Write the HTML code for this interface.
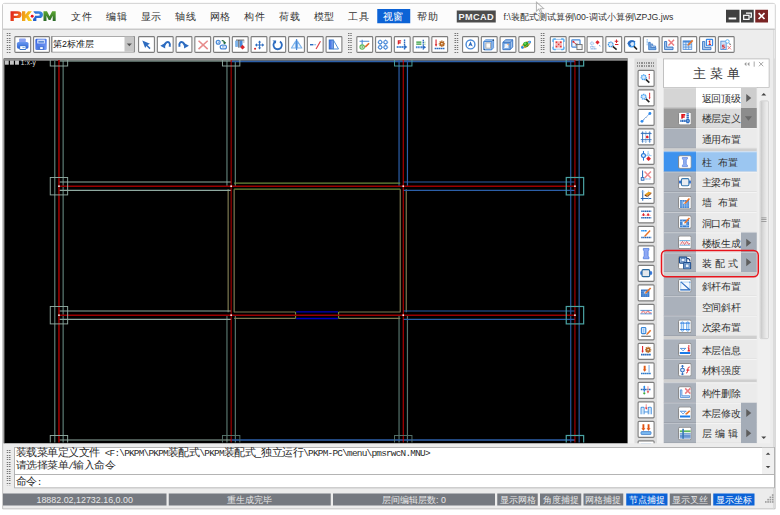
<!DOCTYPE html>
<html lang="zh"><head><meta charset="utf-8"><title>PKPM PMCAD</title>
<style>
html,body{margin:0;padding:0;background:#fff;}
body{width:780px;height:515px;overflow:hidden;position:relative;font-family:"Liberation Sans",sans-serif;}
#root{position:absolute;left:0;top:0;width:1040px;height:687px;transform:scale(.75);transform-origin:0 0;overflow:hidden;}
#root div{position:absolute;box-sizing:border-box;}
.mi{font-size:13.6px;line-height:18.93px;color:#333;white-space:nowrap;text-align:center;}
.tb{}
.tb svg{position:absolute;left:0;top:0;display:block;}
.mono{font-family:"Liberation Mono",monospace;font-size:12.53px;letter-spacing:-1.02px;}
svg{overflow:visible;}
</style></head>
<body><div id="root">
<div class="win" style="left:2.93px;top:3.73px;width:1031.2px;height:675.6px;background:#ececec;border:1px solid #b4b4b4;border-radius:3px 3px 0 0;"></div>
<div style="left:4px;top:4.8px;width:1029.33px;height:33.87px;background:#fcfcfc;"></div>
<div style="left:4px;top:38.4px;width:1029.33px;height:1.33px;background:#c9c9c9;"></div>
<div style="left:4px;top:39.73px;width:1029.33px;height:38.4px;background:#ededed;"></div>
<div style="left:1030.93px;top:40px;width:1.07px;height:638.67px;background:#d6d6d6;"></div>
<svg width="60.27px" height="12.93px" viewBox="0 0 45.2 9.7" style="position:absolute;left:13.73px;top:14.67px">
<defs><linearGradient id="lg1" x1="0" y1="0" x2="1" y2=".4"><stop offset="0" stop-color="#e0201c"/><stop offset=".55" stop-color="#e8421c"/><stop offset="1" stop-color="#ee7a1a"/></linearGradient>
<linearGradient id="lg2" x1="0" y1="0" x2="1" y2=".3"><stop offset="0" stop-color="#ef8f18"/><stop offset="1" stop-color="#f6cf1a"/></linearGradient>
<linearGradient id="lg3" x1="0" y1="1" x2="1" y2="0"><stop offset="0" stop-color="#1a55c8"/><stop offset="1" stop-color="#3f90e6"/></linearGradient>
<linearGradient id="lg4" x1="0" y1="0" x2="0" y2="1"><stop offset="0" stop-color="#5aa630"/><stop offset="1" stop-color="#2c6a2a"/></linearGradient></defs>
<path d="M0 0 H7 C10 0 11.1 1.6 11.1 3.4 C11.1 5.4 9.8 6.8 7 6.8 H3.3 V9.7 H0 Z M3.3 2.6 V4.4 H6.4 C7.4 4.4 7.8 4 7.8 3.5 C7.8 3 7.4 2.6 6.4 2.6 Z" fill="url(#lg1)" fill-rule="evenodd"/>
<path d="M11.5 0 H14.8 V3.5 L17.6 0 H21.4 L17.9 4.3 L21.6 9.7 H17.7 L15.6 6.3 L14.8 7.2 V9.7 H11.5 Z" fill="url(#lg2)"/>
<path d="M23.6 0 H28.4 C31.4 0 32.5 1.6 32.5 3.4 C32.5 5.4 31.2 6.8 28.4 6.8 H25.9 V9.7 H22.6 V6.6 L24.6 4.4 H27.8 C28.8 4.4 29.2 4 29.2 3.5 C29.2 3 28.8 2.6 27.8 2.6 H24.8 L22.8 0.6 Z" fill="url(#lg3)"/>
<circle cx="21.7" cy="5" r="2.5" fill="#fcfcfc"/><circle cx="21.7" cy="5" r="1.45" fill="#e8121c"/>
<path d="M33 9.7 V0 H36.5 L39.1 5 L41.7 0 H45.2 V9.7 H42.2 V4.6 L40 8.7 H38.2 L36 4.6 V9.7 Z" fill="url(#lg4)"/>
</svg>
<div class="mi" style="left:88px;top:13.2px;width:42.67px;height:18.8px;">文件</div>
<div class="mi" style="left:134.13px;top:13.2px;width:42.67px;height:18.8px;">编辑</div>
<div class="mi" style="left:180.27px;top:13.2px;width:42.67px;height:18.8px;">显示</div>
<div class="mi" style="left:226.4px;top:13.2px;width:42.67px;height:18.8px;">轴线</div>
<div class="mi" style="left:272.53px;top:13.2px;width:42.67px;height:18.8px;">网格</div>
<div class="mi" style="left:318.67px;top:13.2px;width:42.67px;height:18.8px;">构件</div>
<div class="mi" style="left:364.8px;top:13.2px;width:42.67px;height:18.8px;">荷载</div>
<div class="mi" style="left:410.93px;top:13.2px;width:42.67px;height:18.8px;">模型</div>
<div class="mi" style="left:457.07px;top:13.2px;width:42.67px;height:18.8px;">工具</div>
<div style="left:502.93px;top:12.27px;width:43.73px;height:18.93px;background:#0c63d6;"></div>
<div class="mi" style="left:503.2px;top:13.2px;width:42.67px;height:18.8px;color:#fff;">视窗</div>
<div class="mi" style="left:549.33px;top:13.2px;width:42.67px;height:18.8px;">帮助</div>
<div style="left:608.8px;top:13.6px;width:52.27px;height:16.53px;background:#4c4c4c;color:#f4f4f4;font-weight:bold;font-size:12.27px;line-height:17.07px;text-align:center;letter-spacing:0.5px;">PMCAD</div>
<div style="left:671.33px;top:12.8px;width:262px;height:18.93px;font-size:11.6px;line-height:18.93px;color:#333;white-space:nowrap;">f:\装配式测试算例\00-调试小算例\ZPJG.jws</div>
<div style="left:968.4px;top:13.33px;width:17.2px;height:16.8px;background:#404040;"><svg width="100%" height="100%" viewBox="0 0 17 17" preserveAspectRatio="none"><rect x="3.5" y="10.5" width="10" height="2.6" fill="#fff"/></svg></div>
<div style="left:988px;top:13.33px;width:17.33px;height:16.8px;background:#404040;"><svg width="100%" height="100%" viewBox="0 0 17 17" preserveAspectRatio="none"><path d="M6.5 4.5h7v5.5h-2" fill="none" stroke="#fff" stroke-width="1.6"/><rect x="3.5" y="7.5" width="7" height="5.5" fill="none" stroke="#fff" stroke-width="1.6"/></svg></div>
<div style="left:1007.47px;top:13.33px;width:16.8px;height:16.8px;background:#7a2424;"><svg width="100%" height="100%" viewBox="0 0 17 17" preserveAspectRatio="none"><path d="M4.5 4.5l8 8M12.5 4.5l-8 8" stroke="#fff" stroke-width="2.2"/></svg></div>
<svg style="position:absolute;left:714.4px;top:1.6px" width="14.67px" height="17.33px" viewBox="0 0 12 14"><path d="M1 0.5 L1 10.5 L3.6 8.2 L5.6 12.6 L7.2 11.9 L5.3 7.7 L8.8 7.5 Z" fill="#fdfdfd" stroke="#b4b4b4" stroke-width="1.1"/></svg>
<div style="left:8.53px;top:44.27px;width:2px;height:28px;background:repeating-linear-gradient(to bottom,#777 0,#777 1.5px,#ededed 1.5px,#ededed 3.1px);"></div><div style="left:11.6px;top:44.27px;width:2px;height:28px;background:repeating-linear-gradient(to bottom,#777 0,#777 1.5px,#ededed 1.5px,#ededed 3.1px);"></div>
<div class="tb" style="left:18.8px;top:47.73px;width:22.67px;height:22.67px;"><svg width="22.67px" height="22.67px" viewBox="0 0 23 23"><rect x=".8" y=".8" width="21.4" height="21.4" rx="1.2" fill="#fff" stroke="#7c7c7c" stroke-width="1.45"/><g transform="translate(-0.2 0.4)"><defs><linearGradient id="gp" x1="0" y1="0" x2="0" y2="1"><stop offset="0" stop-color="#6a9af0"/><stop offset="1" stop-color="#2f62d6"/></linearGradient></defs><rect x="6.8" y="3.1" width="9" height="6" rx="1" fill="#8aa2f2"/><rect x="3.8" y="7.6" width="15.7" height="9.2" rx="2.2" fill="url(#gp)"/><rect x="7.2" y="12.6" width="9" height="6" rx="1" fill="#3a78cc"/><rect x="8.2" y="13.4" width="7.2" height="3.8" fill="#fff"/><rect x="11.3" y="14.9" width="3.1" height="1" fill="#4a8ad8"/></g></svg></div>
<div class="tb" style="left:44.4px;top:47.73px;width:22.67px;height:22.67px;"><svg width="22.67px" height="22.67px" viewBox="0 0 23 23"><rect x=".8" y=".8" width="21.4" height="21.4" rx="1.2" fill="#fff" stroke="#7c7c7c" stroke-width="1.45"/><g transform="translate(-0.2 0.4)"><defs><linearGradient id="gf" x1="0" y1="0" x2="1" y2="1"><stop offset="0" stop-color="#2f5fe0"/><stop offset="1" stop-color="#7fa2f4"/></linearGradient></defs><rect x="3.4" y="3.4" width="15.4" height="15.1" rx="1.6" fill="url(#gf)"/><rect x="5.8" y="4.5" width="10.6" height="5.4" rx=".6" fill="#cfdcf8"/><rect x="7.5" y="6.4" width="7.5" height="2.2" fill="#5a8ad8"/><rect x="6.2" y="13.4" width="9.2" height="5" fill="#4a78d8"/><rect x="9.9" y="14.7" width="3.5" height="2.5" fill="#fff"/></g></svg></div>
<div style="left:68.27px;top:47.73px;width:111.6px;height:22.53px;background:#8e8e8e;border-radius:1px;"></div>
<div style="left:69.73px;top:49.2px;width:108.67px;height:19.6px;background:#fff;"></div>
<div style="left:166.13px;top:49.2px;width:12.27px;height:19.6px;background:#c6c6c6;"></div>
<svg style="position:absolute;left:169.07px;top:57.87px" width="6.93px" height="3.73px" viewBox="0 0 8 4"><path d="M0 0H8L4 4Z" fill="#555"/></svg>
<div style="left:70.67px;top:48.8px;width:94.67px;height:20.53px;font-size:11.87px;line-height:20.8px;color:#111;white-space:nowrap;">第2标准层</div>
<div class="tb" style="left:184.27px;top:47.73px;width:22.67px;height:22.67px;"><svg width="22.67px" height="22.67px" viewBox="0 0 23 23"><rect x=".8" y=".8" width="21.4" height="21.4" rx="1.2" fill="#fff" stroke="#7c7c7c" stroke-width="1.45"/><g transform="translate(-0.2 0.4)"><path d="M6 5.8 L16.4 10.2 L13 11.7 L17.2 16 L15.8 17.4 L11.6 13.2 L9.9 15.8 Z" fill="#2d6cc0"/></g></svg></div>
<div class="tb" style="left:209.24px;top:47.73px;width:22.67px;height:22.67px;"><svg width="22.67px" height="22.67px" viewBox="0 0 23 23"><rect x=".8" y=".8" width="21.4" height="21.4" rx="1.2" fill="#fff" stroke="#7c7c7c" stroke-width="1.45"/><g transform="translate(-0.2 0.4)"><path d="M5 12.8 L11.6 9 V16.6 Z" fill="#2d6cc0"/><path d="M11 12.4 C11.4 8.4 15 6.6 17 8.6 C18.4 10 18.3 12 17.7 14.2" fill="none" stroke="#2d6cc0" stroke-width="2.7"/></g></svg></div>
<div class="tb" style="left:234.21px;top:47.73px;width:22.67px;height:22.67px;"><svg width="22.67px" height="22.67px" viewBox="0 0 23 23"><rect x=".8" y=".8" width="21.4" height="21.4" rx="1.2" fill="#fff" stroke="#7c7c7c" stroke-width="1.45"/><g transform="translate(-0.2 0.4)"><path d="M18.4 12.8 L11.8 9 V16.6 Z" fill="#2d6cc0"/><path d="M12.4 12.4 C12 8.4 8.4 6.6 6.4 8.6 C5 10 5.1 12 5.7 14.2" fill="none" stroke="#2d6cc0" stroke-width="2.7"/></g></svg></div>
<div class="tb" style="left:259.19px;top:47.73px;width:22.67px;height:22.67px;"><svg width="22.67px" height="22.67px" viewBox="0 0 23 23"><rect x=".8" y=".8" width="21.4" height="21.4" rx="1.2" fill="#fff" stroke="#7c7c7c" stroke-width="1.45"/><g transform="translate(-0.2 0.4)"><path d="M6 6 L18.4 17.4 M18.4 6 L6 17.4" stroke="#e78b8b" stroke-width="2.1" fill="none"/></g></svg></div>
<div class="tb" style="left:284.16px;top:47.73px;width:22.67px;height:22.67px;"><svg width="22.67px" height="22.67px" viewBox="0 0 23 23"><rect x=".8" y=".8" width="21.4" height="21.4" rx="1.2" fill="#fff" stroke="#7c7c7c" stroke-width="1.45"/><g transform="translate(-0.2 0.4)"><circle cx="7.2" cy="8" r="2.6" fill="#fff" stroke="#4a8ad8" stroke-width="1.7"/><circle cx="7.4" cy="8" r=".8" fill="#4a8ad8"/><rect x="10" y="11.8" width="8.4" height="5.2" rx="2.6" fill="#fff" stroke="#4a8ad8" stroke-width="1.7"/><path d="M12.4 14.4h3.4" stroke="#4a8ad8" stroke-width="1.2"/><path d="M12 5.2 C14.6 5 16.2 6.4 16.4 8.2 L18 7.8 L16.4 11 L13.4 8.8 L15 8.5 C14.6 7.2 13.6 6.8 12 6.8 Z" fill="#1f6b3f"/></g></svg></div>
<div class="tb" style="left:309.13px;top:47.73px;width:22.67px;height:22.67px;"><svg width="22.67px" height="22.67px" viewBox="0 0 23 23"><rect x=".8" y=".8" width="21.4" height="21.4" rx="1.2" fill="#fff" stroke="#7c7c7c" stroke-width="1.45"/><g transform="translate(-0.2 0.4)"><rect x="4.8" y="5.6" width="3.8" height="8.8" rx="1" fill="#7db3ea"/><rect x="8.8" y="5" width="2" height="10.4" fill="#6e7680"/><rect x="11" y="5.6" width="3.8" height="9" fill="#4a8ad8"/><path d="M6 5.1H17" stroke="#444" stroke-width="1.1"/><path d="M16.6 5.2V9" stroke="#999" stroke-width="1"/><path d="M14.8 11.6 L18 14.8 L14.8 18 L11.6 14.8 Z" fill="#d9262c"/></g></svg></div>
<div class="tb" style="left:334.11px;top:47.73px;width:22.67px;height:22.67px;"><svg width="22.67px" height="22.67px" viewBox="0 0 23 23"><rect x=".8" y=".8" width="21.4" height="21.4" rx="1.2" fill="#fff" stroke="#7c7c7c" stroke-width="1.45"/><g transform="translate(-0.2 0.4)"><path d="M12.5 5.6 L14.7 8.4 H13.2 V11 H16 V9.4 L18.8 11.7 L16 14 V12.4 H13.2 V15 H14.7 L12.5 17.8 L10.3 15 H11.8 V12.4 H9 V14 L6.2 11.7 L9 9.4 V11 H11.8 V8.4 H10.3 Z" fill="#2d6cc0"/><circle cx="6.4" cy="16.9" r="1.4" fill="#d9262c"/></g></svg></div>
<div class="tb" style="left:359.08px;top:47.73px;width:22.67px;height:22.67px;"><svg width="22.67px" height="22.67px" viewBox="0 0 23 23"><rect x=".8" y=".8" width="21.4" height="21.4" rx="1.2" fill="#fff" stroke="#7c7c7c" stroke-width="1.45"/><g transform="translate(-0.2 0.4)"><path d="M8.6 7 A5.7 5.7 0 1 0 14.6 7" fill="none" stroke="#2d6cc0" stroke-width="2.5"/><path d="M4.6 5.6 L9.6 5.6 L9.2 10 Z" fill="#2d6cc0"/></g></svg></div>
<div class="tb" style="left:384.05px;top:47.73px;width:22.67px;height:22.67px;"><svg width="22.67px" height="22.67px" viewBox="0 0 23 23"><rect x=".8" y=".8" width="21.4" height="21.4" rx="1.2" fill="#fff" stroke="#7c7c7c" stroke-width="1.45"/><g transform="translate(-0.2 0.4)"><path d="M10.7 6.6 L10.7 15.9 L4.8 15.9 Z M12.9 6.6 L12.9 15.9 L19 15.9 Z" fill="#eaf3fc" stroke="#7db3ea" stroke-width="1.5" stroke-linejoin="round"/><path d="M11.8 3.8 V18.6" stroke="#4a8ad8" stroke-width="1.7"/></g></svg></div>
<div class="tb" style="left:409.03px;top:47.73px;width:22.67px;height:22.67px;"><svg width="22.67px" height="22.67px" viewBox="0 0 23 23"><rect x=".8" y=".8" width="21.4" height="21.4" rx="1.2" fill="#fff" stroke="#7c7c7c" stroke-width="1.45"/><g transform="translate(-0.2 0.4)"><path d="M4.6 11.4 H9.2" stroke="#2d6cc0" stroke-width="1.9"/><path d="M10.4 11.4 H12.8" stroke="#7db3ea" stroke-width="1.5"/><path d="M18.8 6.8 L12.8 17.2" stroke="#e0444a" stroke-width="1.6"/></g></svg></div>
<div class="tb" style="left:434px;top:47.73px;width:22.67px;height:22.67px;"><svg width="22.67px" height="22.67px" viewBox="0 0 23 23"><rect x=".8" y=".8" width="21.4" height="21.4" rx="1.2" fill="#fff" stroke="#7c7c7c" stroke-width="1.45"/><g transform="translate(-0.2 0.4)"><defs><linearGradient id="g12" x1="0" x2="1"><stop offset="0" stop-color="#2f5fe0"/><stop offset="1" stop-color="#8fb4f4"/></linearGradient></defs><rect x="5.2" y="5" width="5.6" height="12.2" fill="url(#g12)" stroke="#2d6cc0" stroke-width="1.2"/><path d="M10.8 5 L17.8 17.2 H10.8" fill="none" stroke="#4a8ad8" stroke-width="1.3"/></g></svg></div>
<div style="left:464.4px;top:44.27px;width:2px;height:28px;background:repeating-linear-gradient(to bottom,#777 0,#777 1.5px,#ededed 1.5px,#ededed 3.1px);"></div><div style="left:467.47px;top:44.27px;width:2px;height:28px;background:repeating-linear-gradient(to bottom,#777 0,#777 1.5px,#ededed 1.5px,#ededed 3.1px);"></div>
<div class="tb" style="left:475.33px;top:47.73px;width:22.67px;height:22.67px;"><svg width="22.67px" height="22.67px" viewBox="0 0 23 23"><rect x=".8" y=".8" width="21.4" height="21.4" rx="1.2" fill="#fff" stroke="#7c7c7c" stroke-width="1.45"/><g transform="translate(-0.2 0.4)"><path d="M4.6 6.8 H17.8 M8.2 4.8 V11.6" stroke="#4a8ad8" stroke-width="1.5" fill="none"/><circle cx="8.2" cy="14.6" r="3" fill="#e6f5e6" stroke="#5cb85c" stroke-width="1.5"/><path d="M8.2 13V16.2" stroke="#3c9c3c" stroke-width="1.2"/><path d="M12 13.2 L16.8 8.6 L18.4 10.2 L13.6 14.8 L11.6 15.2 Z" fill="#e06a2a"/></g></svg></div>
<div class="tb" style="left:500.31px;top:47.73px;width:22.67px;height:22.67px;"><svg width="22.67px" height="22.67px" viewBox="0 0 23 23"><rect x=".8" y=".8" width="21.4" height="21.4" rx="1.2" fill="#fff" stroke="#7c7c7c" stroke-width="1.45"/><g transform="translate(-0.2 0.4)"><g fill="#fff" stroke="#4a8ad8" stroke-width="1.5"><path d="M7.2 4.2V18.6M14.5 4.2V18.6M3.6 8H18.2M3.6 14.9H18.2" stroke-width=".9"/><circle cx="7.2" cy="8" r="2.3"/><circle cx="14.5" cy="8" r="2.3"/><circle cx="7.2" cy="14.9" r="2.3"/><circle cx="14.5" cy="14.9" r="2.3"/></g></g></svg></div>
<div class="tb" style="left:525.28px;top:47.73px;width:22.67px;height:22.67px;"><svg width="22.67px" height="22.67px" viewBox="0 0 23 23"><rect x=".8" y=".8" width="21.4" height="21.4" rx="1.2" fill="#fff" stroke="#7c7c7c" stroke-width="1.45"/><g transform="translate(-0.2 0.4)"><path d="M5.6 5.3 H10.2 V7.2 H7.8 V8 H9.8 V9.6 H7.8 L6.6 11.2 H5.6 Z" fill="#d9262c"/><path d="M14.8 4.2 V18" stroke="#2d6cc0" stroke-width="1.9" stroke-dasharray="2.2 .7"/><path d="M4.2 14.4 H15" stroke="#4a8ad8" stroke-width="2.6" stroke-dasharray="1.8 .5"/><path d="M14.6 11.6 L18.6 14.4 L14.6 17.2 Z" fill="#2d6cc0"/></g></svg></div>
<div class="tb" style="left:550.25px;top:47.73px;width:22.67px;height:22.67px;"><svg width="22.67px" height="22.67px" viewBox="0 0 23 23"><rect x=".8" y=".8" width="21.4" height="21.4" rx="1.2" fill="#fff" stroke="#7c7c7c" stroke-width="1.45"/><g transform="translate(-0.2 0.4)"><path d="M5.3 8 H12.2 M5.3 10.7 H12.2" stroke="#2f9a3a" stroke-width="1.7"/><path d="M16.2 8h1.6M16.2 10.7h1.6" stroke="#6cc06c" stroke-width="1.2"/><path d="M14.8 4.8 V18" stroke="#2d6cc0" stroke-width="1.9" stroke-dasharray="2.2 .7"/><path d="M4.8 14.8 H15" stroke="#4a8ad8" stroke-width="2.6" stroke-dasharray="1.8 .5"/><path d="M14.6 12 L18.6 14.8 L14.6 17.6 Z" fill="#2d6cc0"/></g></svg></div>
<div class="tb" style="left:575.23px;top:47.73px;width:22.67px;height:22.67px;"><svg width="22.67px" height="22.67px" viewBox="0 0 23 23"><rect x=".8" y=".8" width="21.4" height="21.4" rx="1.2" fill="#fff" stroke="#7c7c7c" stroke-width="1.45"/><g transform="translate(-0.2 0.4)"><path d="M6.7 4.2 V12" stroke="#d9262c" stroke-width="1.5"/><path d="M5 10.8 L6.7 14 L8.4 10.8 Z" fill="#d9262c"/><g stroke="#b5651d" stroke-width="1.7"><path d="M14.6 5.8V14.4M10.3 10.1H18.9M11.6 7.1L17.6 13.1M17.6 7.1L11.6 13.1"/></g><circle cx="14.6" cy="10.1" r="2.5" fill="#b5651d"/><circle cx="14.6" cy="10.1" r="1.1" fill="#fff"/><path d="M4.8 16.5 H18.6" stroke="#2d6cc0" stroke-width="2.2" stroke-dasharray="2.2 .5"/></g></svg></div>
<div style="left:605.73px;top:44.27px;width:2px;height:28px;background:repeating-linear-gradient(to bottom,#777 0,#777 1.5px,#ededed 1.5px,#ededed 3.1px);"></div><div style="left:608.8px;top:44.27px;width:2px;height:28px;background:repeating-linear-gradient(to bottom,#777 0,#777 1.5px,#ededed 1.5px,#ededed 3.1px);"></div>
<div class="tb" style="left:616.27px;top:47.73px;width:22.67px;height:22.67px;"><svg width="22.67px" height="22.67px" viewBox="0 0 23 23"><rect x=".8" y=".8" width="21.4" height="21.4" rx="1.2" fill="#fff" stroke="#7c7c7c" stroke-width="1.45"/><g transform="translate(-0.2 0.4)"><circle cx="11.7" cy="11" r="6" fill="#fff" stroke="#4a8ad8" stroke-width="1.9"/><path d="M11.7 6.8 L14.8 13.8 L11.7 12.2 L8.6 13.8 Z" fill="#2d6cc0"/></g></svg></div>
<div class="tb" style="left:641.24px;top:47.73px;width:22.67px;height:22.67px;"><svg width="22.67px" height="22.67px" viewBox="0 0 23 23"><rect x=".8" y=".8" width="21.4" height="21.4" rx="1.2" fill="#fff" stroke="#7c7c7c" stroke-width="1.45"/><g transform="translate(-0.2 0.4)"><path d="M4.4 7 L7 4.7 H17.6 V15.6 L15.2 18.1 H4.4 Z" fill="#a9c8ee" stroke="#4a8ad8" stroke-width="1.1"/><rect x="4.4" y="7" width="10.8" height="11.1" rx=".8" fill="#cfe0f5" stroke="#4a8ad8" stroke-width="1.4"/><rect x="7.2" y="9" width="6.4" height="7" fill="#fbfbfb" stroke="#9a9a9a" stroke-width="1"/><path d="M15.2 7 L17.6 4.7" stroke="#4a8ad8" stroke-width="1.1"/><circle cx="17.2" cy="5.2" r=".9" fill="#234"/><circle cx="5" cy="17.5" r=".8" fill="#234"/></g></svg></div>
<div class="tb" style="left:666.21px;top:47.73px;width:22.67px;height:22.67px;"><svg width="22.67px" height="22.67px" viewBox="0 0 23 23"><rect x=".8" y=".8" width="21.4" height="21.4" rx="1.2" fill="#fff" stroke="#7c7c7c" stroke-width="1.45"/><g transform="translate(-0.2 0.4)"><path d="M4.8 8.2 L8.6 4.7 H18.1 V14.4 L14.6 18.1 H4.8 Z" fill="#9fc2ec" stroke="#2d6cc0" stroke-width="1.2"/><path d="M4.8 8.2 H14.6 V18.1 M14.6 8.2 L18.1 4.7" fill="none" stroke="#2d6cc0" stroke-width="1.2"/><rect x="6.4" y="10" width="6.6" height="6.6" fill="#e4eefb" stroke="#4a8ad8" stroke-width=".8"/><path d="M6.8 16.2 L12.6 10.4" stroke="#fff" stroke-width="1.3"/><path d="M10.5 10.6h1.8v1.6" stroke="#e8842a" stroke-width=".9" fill="none"/></g></svg></div>
<div class="tb" style="left:691.19px;top:47.73px;width:22.67px;height:22.67px;"><svg width="22.67px" height="22.67px" viewBox="0 0 23 23"><rect x=".8" y=".8" width="21.4" height="21.4" rx="1.2" fill="#fff" stroke="#7c7c7c" stroke-width="1.45"/><g transform="translate(-0.2 0.4)"><ellipse cx="10.6" cy="11.4" rx="6.4" ry="2.6" transform="rotate(-35 10.6 11.4)" fill="none" stroke="#e8922a" stroke-width="1.3"/><circle cx="10.6" cy="11" r="3.7" fill="#22a022"/><circle cx="9.6" cy="9.8" r="1.6" fill="#7be06a" opacity=".85"/><path d="M6 15.2 C8 15.2 12 13.4 14.6 10" fill="none" stroke="#e8922a" stroke-width="1.2"/><circle cx="15.6" cy="7.8" r="1.9" fill="#2a8ae8"/><circle cx="15.6" cy="7.8" r=".7" fill="#bfe0ff"/><circle cx="5.8" cy="15" r="1.7" fill="#2a8ae8"/></g></svg></div>
<div style="left:721.33px;top:44.27px;width:2px;height:28px;background:repeating-linear-gradient(to bottom,#777 0,#777 1.5px,#ededed 1.5px,#ededed 3.1px);"></div><div style="left:724.4px;top:44.27px;width:2px;height:28px;background:repeating-linear-gradient(to bottom,#777 0,#777 1.5px,#ededed 1.5px,#ededed 3.1px);"></div>
<div class="tb" style="left:732.53px;top:47.73px;width:22.67px;height:22.67px;"><svg width="22.67px" height="22.67px" viewBox="0 0 23 23"><rect x=".8" y=".8" width="21.4" height="21.4" rx="1.2" fill="#fff" stroke="#7c7c7c" stroke-width="1.45"/><g transform="translate(-0.2 0.4)"><rect x="5.2" y="4.2" width="13.6" height="13.2" rx="1.4" fill="none" stroke="#4a8ad8" stroke-width=".7"/><path d="M4.6 7.6 V5 Q4.6 3.6 6 3.6 H8.4 M15.6 3.6 H18 Q19.4 3.6 19.4 5 V7.6 M19.4 14 V16.6 Q19.4 18 18 18 H15.6 M8.4 18 H6 Q4.6 18 4.6 16.6 V14" fill="none" stroke="#58aef0" stroke-width="1.9"/><g fill="#e63a3a"><rect x="8" y="6.8" width="2.8" height="2.8"/><rect x="13.6" y="6.8" width="2.8" height="2.8"/><rect x="10.8" y="9.6" width="2.8" height="2.8"/><rect x="8" y="12.4" width="2.8" height="2.8"/><rect x="13.6" y="12.4" width="2.8" height="2.8"/></g><g fill="#f6b4b4"><rect x="10.8" y="6.8" width="2.8" height="2.8"/><rect x="8" y="9.6" width="2.8" height="2.8"/><rect x="13.6" y="9.6" width="2.8" height="2.8"/><rect x="10.8" y="12.4" width="2.8" height="2.8"/></g></g></svg></div>
<div class="tb" style="left:757.51px;top:47.73px;width:22.67px;height:22.67px;"><svg width="22.67px" height="22.67px" viewBox="0 0 23 23"><rect x=".8" y=".8" width="21.4" height="21.4" rx="1.2" fill="#fff" stroke="#7c7c7c" stroke-width="1.45"/><g transform="translate(-0.2 0.4)"><rect x="4.6" y="4.8" width="11.2" height="9.8" rx="1" fill="#eef4fc" stroke="#4a8ad8" stroke-width="1.6"/><path d="M7 7.6 L11.6 11.6" stroke="#d9262c" stroke-width="1.2"/><rect x="5.6" y="6.2" width="2.4" height="2.4" fill="#d9262c"/><path d="M11.6 9.4V11.8H9.4" stroke="#333" stroke-width=".9" fill="none"/><rect x="11.6" y="11.2" width="7" height="6.8" fill="#f4f4f4" stroke="#707070" stroke-width="1.3"/></g></svg></div>
<div class="tb" style="left:782.48px;top:47.73px;width:22.67px;height:22.67px;"><svg width="22.67px" height="22.67px" viewBox="0 0 23 23"><rect x=".8" y=".8" width="21.4" height="21.4" rx="1.2" fill="#fff" stroke="#7c7c7c" stroke-width="1.45"/><g transform="translate(-0.2 0.4)"><path d="M5.4 10 C5.2 7.6 8.4 6.6 9.6 8.6 C10.6 10 9.4 11.8 7.8 11.8 C6.4 11.8 5.6 11 5.4 10 Z" fill="#e2eefb" stroke="#7db3ea" stroke-width="1" stroke-dasharray="1.4 .6"/><path d="M5.2 14.6 C7.4 13.4 9.4 14.8 12 14.4 M5.8 17 H13.6" fill="none" stroke="#4a8ad8" stroke-width="1.2" stroke-dasharray="1.6 .5"/><path d="M15.1 5.2 L18 8.1 L15.1 11 L12.2 8.1 Z" fill="#e02a34"/><path d="M17.6 11.8 L18.8 13.8" stroke="#4a8ad8" stroke-width="1"/></g></svg></div>
<div class="tb" style="left:807.45px;top:47.73px;width:22.67px;height:22.67px;"><svg width="22.67px" height="22.67px" viewBox="0 0 23 23"><rect x=".8" y=".8" width="21.4" height="21.4" rx="1.2" fill="#fff" stroke="#7c7c7c" stroke-width="1.45"/><g transform="translate(-0.2 0.4)"><circle cx="7.6" cy="11" r="3.2" fill="#dcebfa" stroke="#3a94e8" stroke-width="1.7" stroke-dasharray="1.9 .7"/><path d="M10.4 13.8 L15.6 18" stroke="#222" stroke-width="2.2"/><path d="M13 6.8 H17.8 M15.4 4.4 V9.2 M13.4 11.2 H18" stroke="#d9262c" stroke-width="1.4"/></g></svg></div>
<div class="tb" style="left:832.43px;top:47.73px;width:22.67px;height:22.67px;"><svg width="22.67px" height="22.67px" viewBox="0 0 23 23"><rect x=".8" y=".8" width="21.4" height="21.4" rx="1.2" fill="#fff" stroke="#7c7c7c" stroke-width="1.45"/><g transform="translate(-0.2 0.4)"><circle cx="10.6" cy="10.3" r="4" fill="#dcebfa" stroke="#3a94e8" stroke-width="1.7"/><path d="M13.8 13.6 L17.8 17.8" stroke="#222" stroke-width="2.2"/><path d="M5 9.4 C6 5.6 11 4.2 15.8 6.8 L14.6 8.4 C11.6 7 9 8 8.6 10.8 L10.4 12.8 L8.4 13.4 L4.6 10 Z" fill="#2d6cc0"/></g></svg></div>
<div class="tb" style="left:857.4px;top:47.73px;width:22.67px;height:22.67px;"><svg width="22.67px" height="22.67px" viewBox="0 0 23 23"><rect x=".8" y=".8" width="21.4" height="21.4" rx="1.2" fill="#fff" stroke="#7c7c7c" stroke-width="1.45"/><g transform="translate(-0.2 0.4)"><path d="M6.2 4 V12.4" stroke="#7db3ea" stroke-width="1.6" stroke-dasharray="1.3 .7"/><path d="M8.2 8.2 H10.4 V15.4 H18 V18.1 H8.2 Z" fill="#7db3ea" stroke="#2d6cc0" stroke-width="1"/><path d="M11.6 10.4 H13.6 V13.2 H17.6 V15.2 H11.6 Z" fill="#dbe9f9" stroke="#2d6cc0" stroke-width="1"/></g></svg></div>
<div class="tb" style="left:882.37px;top:47.73px;width:22.67px;height:22.67px;"><svg width="22.67px" height="22.67px" viewBox="0 0 23 23"><rect x=".8" y=".8" width="21.4" height="21.4" rx="1.2" fill="#fff" stroke="#7c7c7c" stroke-width="1.45"/><g transform="translate(-0.2 0.4)"><path d="M4.4 7 H7.2 V14.6 H15.8 V18 H4.4 Z" fill="#a9c8ee" stroke="#2d6cc0" stroke-width="1.2"/><path d="M9.6 4.8 L17.2 12.4 M17.2 4.8 L9.6 12.4" stroke="#ec7c80" stroke-width="2"/></g></svg></div>
<div class="tb" style="left:907.35px;top:47.73px;width:22.67px;height:22.67px;"><svg width="22.67px" height="22.67px" viewBox="0 0 23 23"><rect x=".8" y=".8" width="21.4" height="21.4" rx="1.2" fill="#fff" stroke="#7c7c7c" stroke-width="1.45"/><g transform="translate(-0.2 0.4)"><rect x="4" y="6.2" width="11.8" height="11.8" fill="#dcebfa" stroke="#4a8ad8" stroke-width="1"/><rect x="4" y="6.2" width="11.8" height="2.2" fill="#4a8ad8"/><path d="M4 11.4H15.8M4 14.6H15.8M7.8 6.2V18M11.6 6.2V18" stroke="#4a8ad8" stroke-width="1"/><path d="M10.4 10.6 L16.2 4.6 L17.9 6.3 L12 12.2 L10 12.7 Z" fill="#e8742a"/></g></svg></div>
<div class="tb" style="left:932.32px;top:47.73px;width:22.67px;height:22.67px;"><svg width="22.67px" height="22.67px" viewBox="0 0 23 23"><rect x=".8" y=".8" width="21.4" height="21.4" rx="1.2" fill="#fff" stroke="#7c7c7c" stroke-width="1.45"/><g transform="translate(-0.2 0.4)"><path d="M5 7 H8 V15 H16.4 V18.1 H5 Z" fill="#a9c8ee" stroke="#2d6cc0" stroke-width="1.1"/><rect x="10.2" y="4.2" width="8.4" height="8.6" rx=".6" fill="#f2f7fd" stroke="#3a8ae8" stroke-width="1.6"/><path d="M13.4 7.2 L14.8 6.3 V11 M13.2 11 H16.4" fill="none" stroke="#d9262c" stroke-width="1.4"/></g></svg></div>
<div class="tb" style="left:957.29px;top:47.73px;width:22.67px;height:22.67px;"><svg width="22.67px" height="22.67px" viewBox="0 0 23 23"><rect x=".8" y=".8" width="21.4" height="21.4" rx="1.2" fill="#fff" stroke="#7c7c7c" stroke-width="1.45"/><g transform="translate(-0.2 0.4)"><rect x="4.4" y="6.6" width="7.2" height="11.4" fill="#cfe0f5" stroke="#4a8ad8" stroke-width="1.1"/><path d="M9.4 12H6.6V14H8.6Q9.6 14 9.6 15Q9.6 16 8.6 16H6.4" fill="none" stroke="#d9262c" stroke-width="1.3"/><circle cx="13.3" cy="7" r="2.4" fill="#fff" stroke="#58aef0" stroke-width="1.3"/><path d="M13.4 13 L18.2 17.8 M18.2 13 L13.4 17.8" stroke="#ec7c80" stroke-width="1.3"/><path d="M15.4 9.4 L17.8 10.4 L17 12 Z" fill="#222"/></g></svg></div>
<div style="left:4.53px;top:77.87px;width:832.8px;height:512.8px;background:#000;border-top:3px solid #8c8c8c;border-left:1px solid #8a8a8a;"></div>
<div style="left:5.07px;top:79.73px;width:832.27px;height:510.4px;overflow:hidden"><svg width="832.27" height="510.40" viewBox="0 0 624.20 382.80" fill="none" style="display:block"><path d="M51.0 -2.7L51.0 384.2" stroke="#56736c" stroke-width="1.3"/><path d="M59.4 -2.7L59.4 384.2" stroke="#56736c" stroke-width="1.3"/><path d="M223.2 -2.7L223.2 126.2" stroke="#56736c" stroke-width="1.3"/><path d="M231.6 -2.7L231.6 126.2" stroke="#56736c" stroke-width="1.3"/><path d="M224.4 129.2L224.4 252.2" stroke="#7d7a52" stroke-width="1.2"/><path d="M230.4 129.2L230.4 252.2" stroke="#7d7a52" stroke-width="1.2"/><path d="M223.2 255.2L223.2 384.2" stroke="#56736c" stroke-width="1.2"/><path d="M231.6 255.2L231.6 384.2" stroke="#56736c" stroke-width="1.2"/><path d="M395.3 -2.7L395.3 126.2" stroke="#2c5fa8" stroke-width="1.2"/><path d="M403.7 -2.7L403.7 126.2" stroke="#2c5fa8" stroke-width="1.2"/><path d="M396.5 129.2L396.5 252.2" stroke="#7d7a52" stroke-width="1.2"/><path d="M402.5 129.2L402.5 252.2" stroke="#7d7a52" stroke-width="1.2"/><path d="M395.3 255.2L395.3 384.2" stroke="#56736c" stroke-width="1.2"/><path d="M403.7 255.2L403.7 384.2" stroke="#56736c" stroke-width="1.2"/><path d="M567.0 -2.7L567.0 384.2" stroke="#2c5fa8" stroke-width="1.1"/><path d="M575.4 -2.7L575.4 384.2" stroke="#2c5fa8" stroke-width="1.1"/><path d="M55.2 -6.5L227.4 -6.5" stroke="#8fa9a0" stroke-width="1.0"/><path d="M55.2 1.1L227.4 1.1" stroke="#8fa9a0" stroke-width="1.0"/><path d="M227.4 -6.9L571.2 -6.9" stroke="#2c5fa8" stroke-width="1.4"/><path d="M227.4 1.5L571.2 1.5" stroke="#2c5fa8" stroke-width="1.4"/><path d="M55.2 122.0L227.4 122.0" stroke="#8fa9a0" stroke-width="1.2"/><path d="M55.2 130.4L227.4 130.4" stroke="#8fa9a0" stroke-width="1.2"/><path d="M230.4 123.2L396.5 123.2" stroke="#6c8a3c" stroke-width="1.2"/><path d="M230.4 129.2L396.5 129.2" stroke="#6c8a3c" stroke-width="1.2"/><path d="M399.5 122.0L571.2 122.0" stroke="#2c5fa8" stroke-width="1.15"/><path d="M399.5 130.4L571.2 130.4" stroke="#2c5fa8" stroke-width="1.15"/><path d="M55.2 251.0L227.4 251.0" stroke="#8fa9a0" stroke-width="1.2"/><path d="M55.2 259.4L227.4 259.4" stroke="#8fa9a0" stroke-width="1.2"/><path d="M230.4 252.0L291.8 252.0" stroke="#7d7a52" stroke-width="1.2"/><path d="M230.4 258.4L291.8 258.4" stroke="#7d7a52" stroke-width="1.2"/><path d="M334.8 252.0L396.5 252.0" stroke="#7d7a52" stroke-width="1.2"/><path d="M334.8 258.4L396.5 258.4" stroke="#7d7a52" stroke-width="1.2"/><path d="M291.8 252.0L291.8 258.4" stroke="#6c8a3c" stroke-width="1.2"/><path d="M334.8 252.0L334.8 258.4" stroke="#6c8a3c" stroke-width="1.2"/><path d="M292.4 251.9L334.2 251.9" stroke="#0000c0" stroke-width="1.3"/><path d="M292.4 258.5L334.2 258.5" stroke="#0000c0" stroke-width="1.3"/><path d="M399.5 251.0L571.2 251.0" stroke="#2c5fa8" stroke-width="1.15"/><path d="M399.5 259.4L571.2 259.4" stroke="#2c5fa8" stroke-width="1.15"/><path d="M55.2 380.0L227.4 380.0" stroke="#8fa9a0" stroke-width="1.0"/><path d="M55.2 388.4L227.4 388.4" stroke="#8fa9a0" stroke-width="1.0"/><path d="M227.4 380.0L571.2 380.0" stroke="#2c5fa8" stroke-width="1.3"/><path d="M227.4 388.4L571.2 388.4" stroke="#2c5fa8" stroke-width="1.3"/><path d="M55.2 126.2L571.2 126.2" stroke="#9a0000" stroke-width="1.5"/><path d="M55.2 255.2L571.2 255.2" stroke="#9a0000" stroke-width="1.4"/><path d="M55.2 -2.7L55.2 384.2" stroke="#9a0000" stroke-width="1.6"/><path d="M227.4 -2.7L227.4 384.2" stroke="#d00000" stroke-width="0.9"/><path d="M399.5 -2.7L399.5 384.2" stroke="#e80000" stroke-width="0.9"/><path d="M571.2 -2.7L571.2 384.2" stroke="#d80000" stroke-width="0.9"/><rect x="46.5" y="-11.4" width="17.4" height="17.4" stroke="#8fa9a0" stroke-width="0.95" fill="none"/><rect x="562.5" y="-11.4" width="17.4" height="17.4" stroke="#4aa3a3" stroke-width="1.2" fill="none"/><rect x="46.5" y="117.5" width="17.4" height="17.4" stroke="#8fa9a0" stroke-width="0.95" fill="none"/><rect x="562.5" y="117.5" width="17.4" height="17.4" stroke="#4aa3a3" stroke-width="1.2" fill="none"/><rect x="46.5" y="246.5" width="17.4" height="17.4" stroke="#8fa9a0" stroke-width="0.95" fill="none"/><rect x="562.5" y="246.5" width="17.4" height="17.4" stroke="#4aa3a3" stroke-width="1.2" fill="none"/><rect x="46.5" y="375.5" width="17.4" height="17.4" stroke="#8fa9a0" stroke-width="0.95" fill="none"/><rect x="562.5" y="375.5" width="17.4" height="17.4" stroke="#4aa3a3" stroke-width="1.2" fill="none"/><rect x="218.7" y="-11.4" width="17.4" height="17.4" stroke="#8fa9a0" stroke-width="0.95" fill="none"/><rect x="390.8" y="-11.4" width="17.4" height="17.4" stroke="#4aa3a3" stroke-width="0.95" fill="none"/><rect x="218.7" y="375.5" width="17.4" height="17.4" stroke="#56736c" stroke-width="0.95" fill="none"/><rect x="390.8" y="375.5" width="17.4" height="17.4" stroke="#56736c" stroke-width="0.95" fill="none"/><rect x="54.4" y="125.4" width="1.6" height="1.6" fill="#f4eaea"/><rect x="54.4" y="254.4" width="1.6" height="1.6" fill="#f4eaea"/><rect x="226.6" y="125.4" width="1.6" height="1.6" fill="#f4eaea"/><rect x="226.6" y="254.4" width="1.6" height="1.6" fill="#f4eaea"/><rect x="398.7" y="125.4" width="1.6" height="1.6" fill="#f4eaea"/><rect x="398.7" y="254.4" width="1.6" height="1.6" fill="#f4eaea"/><rect x="570.4" y="125.4" width="1.6" height="1.6" fill="#f4eaea"/><rect x="570.4" y="254.4" width="1.6" height="1.6" fill="#f4eaea"/><g fill="#c4c4c4"><rect x="1.1" y=".5" width="3.9" height="4.2"/><rect x="6.2" y=".5" width="3.9" height="4.2"/><rect x="11.3" y=".5" width="3.9" height="4.2"/></g><text x="17" y="4.9" style="font-family:&quot;Liberation Sans&quot;,sans-serif" font-size="6.4" fill="#e0e0e0" textLength="15">1:x-y</text></svg></div>
<div style="left:837.33px;top:77.87px;width:8.67px;height:513.6px;background:#f1f1f1;"></div>
<div style="left:846px;top:77.87px;width:30.27px;height:513.6px;background:#dedede;overflow:hidden;"></div>
<div style="left:848.8px;top:83.47px;width:24.53px;height:2px;background:repeating-linear-gradient(to right,#777 0,#777 1.5px,#dedede 1.5px,#dedede 3.1px);"></div>
<div style="left:848.8px;top:86.53px;width:24.53px;height:2px;background:repeating-linear-gradient(to right,#777 0,#777 1.5px,#dedede 1.5px,#dedede 3.1px);"></div>
<div style="left:0;top:0;width:1040px;height:591.47px;overflow:hidden"><div class="tb vb" style="left:849.6px;top:93.33px;width:23.2px;height:22.4px;"><svg width="22.93px" height="22.93px" viewBox="0 0 23 23"><rect x=".8" y=".8" width="21.4" height="21.4" rx="1.3" fill="#fff" stroke="#7e7e7e" stroke-width="1.5"/><g transform="translate(-0.2 0.4)"><circle cx="8.5" cy="9.7" r="3.1" fill="#cfe7fb" stroke="#3f9cf0" stroke-width="2" stroke-dasharray="1.7 .75"/><circle cx="8.5" cy="9.7" r="2.6" fill="#d8ecfc" stroke="#58aaf2" stroke-width=".8"/><path d="M11.4 12.4 L16 16.8" stroke="#222" stroke-width="2.1"/><path d="M16 5.2 V6.8" stroke="#d8262c" stroke-width="1.9"/><path d="M16 7.2 V12.4" stroke="#ea7a7e" stroke-width="1.7"/></g></svg></div><div class="tb vb" style="left:849.6px;top:119.31px;width:23.2px;height:22.4px;"><svg width="22.93px" height="22.93px" viewBox="0 0 23 23"><rect x=".8" y=".8" width="21.4" height="21.4" rx="1.3" fill="#fff" stroke="#7e7e7e" stroke-width="1.5"/><g transform="translate(-0.2 0.4)"><circle cx="8.5" cy="9.7" r="3.1" fill="#cfe7fb" stroke="#3f9cf0" stroke-width="2" stroke-dasharray="1.7 .75"/><circle cx="8.5" cy="9.7" r="2.6" fill="#d8ecfc" stroke="#58aaf2" stroke-width=".8"/><path d="M11.4 12.4 L16 16.8" stroke="#222" stroke-width="2.1"/><path d="M16.4 4.4 V11.4" stroke="#e0444a" stroke-width="1.5"/><path d="M15.2 10.8 L16.4 13.4 L17.6 10.8 Z" fill="#d8262c"/></g></svg></div><div class="tb vb" style="left:849.6px;top:145.28px;width:23.2px;height:22.4px;"><svg width="22.93px" height="22.93px" viewBox="0 0 23 23"><rect x=".8" y=".8" width="21.4" height="21.4" rx="1.3" fill="#fff" stroke="#7e7e7e" stroke-width="1.5"/><g transform="translate(-0.2 0.4)"><path d="M6.2 16.4 L16.8 5.9" stroke="#3a78c8" stroke-width="1.3" stroke-dasharray="1.6 .5"/><circle cx="6.2" cy="16.4" r="1.9" fill="#2a8af0"/><circle cx="16.8" cy="5.9" r="1.9" fill="#2a8af0"/></g></svg></div><div class="tb vb" style="left:849.6px;top:171.25px;width:23.2px;height:22.4px;"><svg width="22.93px" height="22.93px" viewBox="0 0 23 23"><rect x=".8" y=".8" width="21.4" height="21.4" rx="1.3" fill="#fff" stroke="#7e7e7e" stroke-width="1.5"/><g transform="translate(-0.2 0.4)"><path d="M7 4.4V18.4M16.5 4.4V18.4" stroke="#2a6ab8" stroke-width="1.2"/><path d="M11.3 4.4V18.4" stroke="#7aaee0" stroke-width="1"/><path d="M4.6 6.7H19M4.6 14.9H19" stroke="#2a6ab8" stroke-width="1.2"/><path d="M5.6 5.6L7 4L8.4 5.6M9.9 5.6L11.3 4L12.7 5.6M15.1 5.6L16.5 4L17.9 5.6M5.6 17.2L7 18.8L8.4 17.2M9.9 17.2L11.3 18.8L12.7 17.2M15.1 17.2L16.5 18.8L17.9 17.2" fill="none" stroke="#5a94d4" stroke-width=".8"/><path d="M13.2 8.2L16.2 13H10.2Z" fill="#f8c4c4"/><circle cx="13.2" cy="11.4" r="1.7" fill="#e0262c"/></g></svg></div><div class="tb vb" style="left:849.6px;top:197.23px;width:23.2px;height:22.4px;"><svg width="22.93px" height="22.93px" viewBox="0 0 23 23"><rect x=".8" y=".8" width="21.4" height="21.4" rx="1.3" fill="#fff" stroke="#7e7e7e" stroke-width="1.5"/><g transform="translate(-0.2 0.4)"><path d="M4.6 10.1H19" stroke="#8cc4f4" stroke-width="1.2"/><path d="M14.4 3.9V10.6" stroke="#8cc4f4" stroke-width="1.2"/><path d="M8.2 3.9V16.8" stroke="#2a78d8" stroke-width="1.4"/><circle cx="8.2" cy="10.1" r="2.6" fill="#e6f2fc" stroke="#2a78d8" stroke-width="1.5"/><circle cx="14.6" cy="9" r="1.6" fill="#cfe7fb" stroke="#8cc4f4" stroke-width=".9"/><path d="M15 11 L18.2 14.2 L15 17.4 L11.8 14.2 Z" fill="#e0262c"/></g></svg></div><div class="tb vb" style="left:849.6px;top:223.2px;width:23.2px;height:22.4px;"><svg width="22.93px" height="22.93px" viewBox="0 0 23 23"><rect x=".8" y=".8" width="21.4" height="21.4" rx="1.3" fill="#fff" stroke="#7e7e7e" stroke-width="1.5"/><g transform="translate(-0.2 0.4)"><path d="M7 4.1V13.4" stroke="#2a6ab8" stroke-width="1.4"/><rect x="5.2" y="13.4" width="3.6" height="3.6" fill="#cfe3fa" stroke="#2a6ab8" stroke-width="1.2"/><path d="M9.3 15.3H18" stroke="#6aa8e8" stroke-width="1.3" stroke-dasharray="1.5 .5"/><path d="M9.6 5.4 L18.2 14 M18.2 5.4 L9.6 14" stroke="#ee8a8e" stroke-width="2"/></g></svg></div><div class="tb vb" style="left:849.6px;top:249.17px;width:23.2px;height:22.4px;"><svg width="22.93px" height="22.93px" viewBox="0 0 23 23"><rect x=".8" y=".8" width="21.4" height="21.4" rx="1.3" fill="#fff" stroke="#7e7e7e" stroke-width="1.5"/><g transform="translate(-0.2 0.4)"><path d="M7.2 4.3V18.2M4.6 15.2H18.6" stroke="#2a6ab8" stroke-width="1.4"/><path d="M15 4.6V17M4.8 6.4H10" stroke="#9ccaf4" stroke-width=".8"/><path d="M9.8 10 L15 6.4 L18.8 7.4 L13.4 11.5 Z" fill="#eaa21e"/><path d="M9.8 10 L13.4 11.5 V13.2 L9.8 11.7 Z" fill="#6e3410"/><path d="M13.4 11.5 L18.8 7.4 V9.1 L13.4 13.2 Z" fill="#9a4a14"/></g></svg></div><div class="tb vb" style="left:849.6px;top:275.15px;width:23.2px;height:22.4px;"><svg width="22.93px" height="22.93px" viewBox="0 0 23 23"><rect x=".8" y=".8" width="21.4" height="21.4" rx="1.3" fill="#fff" stroke="#7e7e7e" stroke-width="1.5"/><g transform="translate(-0.2 0.4)"><path d="M5.2 6.4H18.6" stroke="#2a6ab8" stroke-width="2.1" stroke-dasharray="2 .5"/><path d="M5.2 15H18.6" stroke="#2a6ab8" stroke-width="2.1" stroke-dasharray="2 .5"/><path d="M5.6 11.9H18.2" stroke="#f4b0b4" stroke-width="1"/><path d="M8.2 9V12.8M14.4 9V12.8" stroke="#e0262c" stroke-width="1.5"/><path d="M6.6 11H9.8M12.8 11H16" stroke="#e0262c" stroke-width="1.6"/></g></svg></div><div class="tb vb" style="left:849.6px;top:301.12px;width:23.2px;height:22.4px;"><svg width="22.93px" height="22.93px" viewBox="0 0 23 23"><rect x=".8" y=".8" width="21.4" height="21.4" rx="1.3" fill="#fff" stroke="#7e7e7e" stroke-width="1.5"/><g transform="translate(-0.2 0.4)"><path d="M5.2 6.4H12.9" stroke="#1a8af0" stroke-width="2.1" stroke-dasharray="2 .5"/><path d="M5.2 15.2H18.6" stroke="#2a6ab8" stroke-width="2.1" stroke-dasharray="2 .5"/><path d="M9.6 12.8 L16.4 5.4 L17.8 6.6 L11 14 L9.2 14.2 Z" fill="#e8742a"/></g></svg></div><div class="tb vb" style="left:849.6px;top:327.09px;width:23.2px;height:22.4px;"><svg width="22.93px" height="22.93px" viewBox="0 0 23 23"><rect x=".8" y=".8" width="21.4" height="21.4" rx="1.3" fill="#fff" stroke="#7e7e7e" stroke-width="1.5"/><g transform="translate(-0.2 0.4)"><path d="M8 3.9H15.5V6.2Q14.4 6.8 14.4 8V13.6Q14.4 14.8 15.5 15.4V17.7H8V15.4Q9.1 14.8 9.1 13.6V8Q9.1 6.8 8 6.2Z" fill="#8ea8f4" stroke="#4a7ae0" stroke-width="1"/></g></svg></div><div class="tb vb" style="left:849.6px;top:353.07px;width:23.2px;height:22.4px;"><svg width="22.93px" height="22.93px" viewBox="0 0 23 23"><rect x=".8" y=".8" width="21.4" height="21.4" rx="1.3" fill="#fff" stroke="#7e7e7e" stroke-width="1.5"/><g transform="translate(-0.2 0.4)"><rect x="3.9" y="8.2" width="15.9" height="4.7" rx="1" fill="#3a7ae0"/><rect x="6.2" y="6.2" width="10.3" height="9.3" rx="1.6" fill="#e4e8ec" stroke="#2a6aa0" stroke-width="1.6"/></g></svg></div><div class="tb vb" style="left:849.6px;top:379.04px;width:23.2px;height:22.4px;"><svg width="22.93px" height="22.93px" viewBox="0 0 23 23"><rect x=".8" y=".8" width="21.4" height="21.4" rx="1.3" fill="#fff" stroke="#7e7e7e" stroke-width="1.5"/><g transform="translate(-0.2 0.4)"><rect x="4.9" y="6.7" width="11.1" height="9.8" fill="#2a6ac0"/><path d="M4.9 9.2H16M4.9 11.6H16M4.9 14H16M7.7 6.7V16.5M10.5 6.7V16.5M13.3 6.7V16.5" stroke="#7fb2ea" stroke-width=".7"/><rect x="9.4" y="9.4" width="3" height="2.6" fill="#fff"/><path d="M10.6 10.4 L17 4 L18.6 5.4 L12.2 11.8 L10.2 12.2 Z" fill="#e8742a"/></g></svg></div><div class="tb vb" style="left:849.6px;top:405.01px;width:23.2px;height:22.4px;"><svg width="22.93px" height="22.93px" viewBox="0 0 23 23"><rect x=".8" y=".8" width="21.4" height="21.4" rx="1.3" fill="#fff" stroke="#7e7e7e" stroke-width="1.5"/><g transform="translate(-0.2 0.4)"><path d="M4.1 8.5H19.6M4.1 13.1H19.6" stroke="#3a8ad8" stroke-width="1.2"/><path d="M5 12.6 L8 9 L11 12.6 L14 9 L17 12.6 L18.6 10.6" fill="none" stroke="#e0444a" stroke-width="1"/><path d="M5 9 L8 12.6 L11 9 L14 12.6 L17 9" fill="none" stroke="#f0a0a4" stroke-width=".7"/></g></svg></div><div class="tb vb" style="left:849.6px;top:430.99px;width:23.2px;height:22.4px;"><svg width="22.93px" height="22.93px" viewBox="0 0 23 23"><rect x=".8" y=".8" width="21.4" height="21.4" rx="1.3" fill="#fff" stroke="#7e7e7e" stroke-width="1.5"/><g transform="translate(-0.2 0.4)"><rect x="5.4" y="5.2" width="5.9" height="8.2" rx="1.2" fill="#cfe3fa" stroke="#3a88d8" stroke-width="1.5"/><path d="M8.3 6.6V12" stroke="#7ab4ee" stroke-width="1"/><path d="M5.2 17H18" stroke="#555" stroke-width="1.5"/><path d="M12.4 13.2 L17 8.2 L18.6 9.6 L14 14.6 L12 15.2 Z" fill="#e8742a"/></g></svg></div><div class="tb vb" style="left:849.6px;top:456.96px;width:23.2px;height:22.4px;"><svg width="22.93px" height="22.93px" viewBox="0 0 23 23"><rect x=".8" y=".8" width="21.4" height="21.4" rx="1.3" fill="#fff" stroke="#7e7e7e" stroke-width="1.5"/><g transform="translate(-0.2 0.4)"><path d="M7 3.8 V11.4" stroke="#e0262c" stroke-width="1.5"/><path d="M5.4 10.2 L7 13.2 L8.6 10.2 Z" fill="#e0262c"/><g stroke="#b5651d" stroke-width="1.7"><path d="M14.4 4.8V13.2M10.2 9H18.6M11.4 6L17.4 12M17.4 6L11.4 12"/></g><circle cx="14.4" cy="9" r="2.5" fill="#b5651d"/><circle cx="14.4" cy="9" r="1.1" fill="#fff"/><path d="M4.9 15.5H18.4" stroke="#2a6ab8" stroke-width="2.4" stroke-dasharray="2.2 .5"/></g></svg></div><div class="tb vb" style="left:849.6px;top:482.93px;width:23.2px;height:22.4px;"><svg width="22.93px" height="22.93px" viewBox="0 0 23 23"><rect x=".8" y=".8" width="21.4" height="21.4" rx="1.3" fill="#fff" stroke="#7e7e7e" stroke-width="1.5"/><g transform="translate(-0.2 0.4)"><path d="M9.8 4.4V10" stroke="#e05a14" stroke-width="2.6"/><path d="M7.4 9.4 L9.8 12.4 L12.2 9.4 Z" fill="#e05a14"/><path d="M15.7 3.4V13.4" stroke="#a8c8ec" stroke-width="2"/><path d="M4.9 14.7H18.4" stroke="#2a78c8" stroke-width="2.2" stroke-dasharray="2.2 .5"/></g></svg></div><div class="tb vb" style="left:849.6px;top:508.91px;width:23.2px;height:22.4px;"><svg width="22.93px" height="22.93px" viewBox="0 0 23 23"><rect x=".8" y=".8" width="21.4" height="21.4" rx="1.3" fill="#fff" stroke="#7e7e7e" stroke-width="1.5"/><g transform="translate(-0.2 0.4)"><path d="M4.6 10.1H18" stroke="#2a6ab8" stroke-width="2" stroke-dasharray="2.2 .5"/><path d="M9.3 6.4V13" stroke="#2a78d8" stroke-width="1.6"/><path d="M7.6 7 L9.3 4.6 L11 7 Z" fill="#1a8af0"/><circle cx="9.3" cy="15" r="1.5" fill="#3aa83a"/><path d="M14.2 5.7V13" stroke="#f0a0a4" stroke-width="1.6"/><path d="M12.5 12.2 L14.2 15.2 L15.9 12.2 Z" fill="#e0444a"/></g></svg></div><div class="tb vb" style="left:849.6px;top:534.88px;width:23.2px;height:22.4px;"><svg width="22.93px" height="22.93px" viewBox="0 0 23 23"><rect x=".8" y=".8" width="21.4" height="21.4" rx="1.3" fill="#fff" stroke="#7e7e7e" stroke-width="1.5"/><g transform="translate(-0.2 0.4)"><path d="M5 17V8.6Q5 7.7 6 7.7H8Q9 7.7 9 8.6V17M14.6 17V8.6Q14.6 7.7 15.6 7.7H17.6Q18.6 7.7 18.6 8.6V17" fill="none" stroke="#4a94e0" stroke-width="1.4"/><path d="M6.4 9V17M7.6 9V17M16 9V17M17.2 9V17" stroke="#9ccaf4" stroke-width=".7"/><path d="M9 13.9H14.6" stroke="#4a94e0" stroke-width="1.3"/><path d="M11.9 3.6V9" stroke="#f0a0a4" stroke-width="1.6"/><path d="M10.3 8 L11.9 10.9 L13.5 8 Z" fill="#e0262c"/></g></svg></div><div class="tb vb" style="left:849.6px;top:560.85px;width:23.2px;height:22.4px;"><svg width="22.93px" height="22.93px" viewBox="0 0 23 23"><rect x=".8" y=".8" width="21.4" height="21.4" rx="1.3" fill="#fff" stroke="#7e7e7e" stroke-width="1.5"/><g transform="translate(-0.2 0.4)"><path d="M8.1 4.3V10.4M15 4.3V10.4" stroke="#e0500e" stroke-width="2.5"/><path d="M5.4 9.8 L8.1 13.1 L10.8 9.8Z M12.3 9.8 L15 13.1 L17.7 9.8Z" fill="#e0500e"/><rect x="4.9" y="14.1" width="13.4" height="4" rx="1" fill="#7ab8f0" stroke="#3a7ac8" stroke-width="1"/></g></svg></div><div class="tb vb" style="left:849.6px;top:586.83px;width:23.2px;height:22.4px;"><svg width="22.93px" height="22.93px" viewBox="0 0 23 23"><rect x=".8" y=".8" width="21.4" height="21.4" rx="1.3" fill="#fff" stroke="#7e7e7e" stroke-width="1.5"/><g transform="translate(-0.2 0.4)"><path d="M4.9 4.9H18.3" stroke="#5a9ad8" stroke-width="1.8"/></g></svg></div></div>
<div style="left:876.27px;top:77.87px;width:8px;height:513.6px;background:#f1f1f1;"></div>
<div style="left:884.27px;top:77.87px;width:142.13px;height:38.67px;background:#fff;border:1px solid #adadad;"></div>
<div style="left:884.27px;top:84.67px;width:142.13px;height:28px;font-size:17.07px;line-height:28px;letter-spacing:5.6px;text-align:center;color:#3a3a3a;text-indent:5.6px;">主菜单</div>
<svg style="position:absolute;left:991.47px;top:82.4px" width="28px" height="6.93px" viewBox="0 0 24 6" fill="none" stroke="#9a9a9a" stroke-width="1"><path d="M1 3l2.5-2.5v5zM4.5 3l2.5-2.5v5z" fill="#9a9a9a" stroke="none"/><path d="M12.5 0v6"/><path d="M18 0.5l5 5M23 0.5l-5 5"/></svg>
<div style="left:0;top:0;width:1040px;height:591.47px;overflow:hidden"><div style="left:884.53px;top:117.2px;width:43.2px;height:26.91px;background:#d5d5d5;border-top:1px solid rgba(255,255,255,.3);border-bottom:1px solid rgba(0,0,0,.1);"></div><div style="left:927.73px;top:117.2px;width:81.33px;height:26.91px;background:#ffffff;border-top:1px solid rgba(255,255,255,.6);border-bottom:1px solid rgba(0,0,0,.06);"></div><div style="left:987.73px;top:117.2px;width:21.33px;height:26.91px;background:#cdcdcd;"></div><div style="left:935.47px;top:122.27px;width:52.27px;height:19.73px;font-size:13.2px;line-height:19.73px;color:#333;white-space:nowrap;overflow:hidden;">返回顶级</div><svg style="position:absolute;left:995.2px;top:125.07px" width="6.67px" height="11.2px" viewBox="0 0 5 8"><path d="M0 0L5 4L0 8Z" fill="#5e5e5e"/></svg><div style="left:884.53px;top:144.11px;width:43.2px;height:26.91px;background:#9a9a9a;border-top:1px solid rgba(255,255,255,.3);border-bottom:1px solid rgba(0,0,0,.1);"></div><div style="left:927.73px;top:144.11px;width:81.33px;height:26.91px;background:#dcdcdc;border-top:1px solid rgba(255,255,255,.6);border-bottom:1px solid rgba(0,0,0,.06);"></div><div style="left:903.6px;top:148.77px;width:18.4px;height:18.13px;overflow:hidden;"><svg style="position:absolute;left:0;top:0" width="18.4px" height="18.13px" viewBox="0 0 18 18"><rect x=".6" y=".6" width="16.8" height="16.8" rx="1.8" fill="#fff" stroke="#808080" stroke-width="1.2"/><path d="M4.2 3.1H9.4V5.3H6.8V6H8.8V7.8H6.8L5.6 9.4H4.2Z" fill="#e0161c"/><path d="M12.7 2.1V15.6" stroke="#2d6cc0" stroke-width="3.2" stroke-dasharray="1.7 .6"/><path d="M2.9 12.1H12" stroke="#2d6cc0" stroke-width="3.2" stroke-dasharray="1.7 .5"/><circle cx="13" cy="12.1" r="2.7" fill="#2d6cc0"/><circle cx="13" cy="12.1" r=".9" fill="#cfe3fa"/></svg></div><div style="left:987.73px;top:144.11px;width:21.33px;height:26.91px;background:#8c8c8c;"></div><div style="left:935.47px;top:149.17px;width:52.27px;height:19.73px;font-size:13.2px;line-height:19.73px;color:#333;white-space:nowrap;overflow:hidden;">楼层定义</div><svg style="position:absolute;left:993.33px;top:155.04px" width="9.87px" height="5.87px" viewBox="0 0 8 5"><path d="M0 0H8L4 5Z" fill="#6a6a6a"/></svg><div style="left:884.53px;top:171.01px;width:43.2px;height:26.91px;background:#aab1bb;border-top:1px solid rgba(255,255,255,.3);border-bottom:1px solid rgba(0,0,0,.1);"></div><div style="left:927.73px;top:171.01px;width:81.33px;height:26.91px;background:#ebebeb;border-top:1px solid rgba(255,255,255,.6);border-bottom:1px solid rgba(0,0,0,.06);"></div><div style="left:935.47px;top:176.08px;width:73.6px;height:19.73px;font-size:13.2px;line-height:19.73px;color:#333;white-space:nowrap;overflow:hidden;">通用布置</div><div style="left:884.53px;top:197.92px;width:124.53px;height:4.13px;background:#cfcfcf;"></div><div style="left:884.53px;top:202.05px;width:43.2px;height:26.91px;background:#3d92ee;border-top:1px solid rgba(255,255,255,.3);border-bottom:1px solid rgba(0,0,0,.1);"></div><div style="left:927.73px;top:202.05px;width:81.33px;height:26.91px;background:#9bc6f1;border-top:1px solid rgba(255,255,255,.6);border-bottom:1px solid rgba(0,0,0,.06);"></div><div style="left:903.6px;top:206.72px;width:18.4px;height:18.13px;overflow:hidden;"><svg style="position:absolute;left:0;top:0" width="18.4px" height="18.13px" viewBox="0 0 18 18"><rect x=".6" y=".6" width="16.8" height="16.8" rx="1.8" fill="#fff" stroke="#808080" stroke-width="1.2"/><path d="M5.6 3H12.4V4.8Q10.8 5.6 10.8 7V11Q10.8 12.4 12.4 13.2V15H5.6V13.2Q7.2 12.4 7.2 11V7Q7.2 5.6 5.6 4.8Z" fill="#8fb0f2" stroke="#5a80e0" stroke-width=".9"/></svg></div><div style="left:935.47px;top:207.12px;width:73.6px;height:19.73px;font-size:13.2px;line-height:19.73px;color:#333;white-space:nowrap;overflow:hidden;">柱&ensp;&thinsp;布置</div><div style="left:884.53px;top:228.96px;width:43.2px;height:26.91px;background:#aab1bb;border-top:1px solid rgba(255,255,255,.3);border-bottom:1px solid rgba(0,0,0,.1);"></div><div style="left:927.73px;top:228.96px;width:81.33px;height:26.91px;background:#ebebeb;border-top:1px solid rgba(255,255,255,.6);border-bottom:1px solid rgba(0,0,0,.06);"></div><div style="left:903.6px;top:233.63px;width:18.4px;height:18.13px;overflow:hidden;"><svg style="position:absolute;left:0;top:0" width="18.4px" height="18.13px" viewBox="0 0 18 18"><rect x=".6" y=".6" width="16.8" height="16.8" rx="1.8" fill="#fff" stroke="#808080" stroke-width="1.2"/><rect x="1.3" y="6.8" width="15.6" height="3.7" fill="#2a6ad0"/><rect x="4.4" y="4.2" width="9.9" height="9.3" rx="1.6" fill="#e9edf1" stroke="#3a7ab0" stroke-width="1.5"/></svg></div><div style="left:935.47px;top:234.03px;width:73.6px;height:19.73px;font-size:13.2px;line-height:19.73px;color:#333;white-space:nowrap;overflow:hidden;">主梁布置</div><div style="left:884.53px;top:255.87px;width:43.2px;height:26.91px;background:#aab1bb;border-top:1px solid rgba(255,255,255,.3);border-bottom:1px solid rgba(0,0,0,.1);"></div><div style="left:927.73px;top:255.87px;width:81.33px;height:26.91px;background:#ebebeb;border-top:1px solid rgba(255,255,255,.6);border-bottom:1px solid rgba(0,0,0,.06);"></div><div style="left:903.6px;top:260.53px;width:18.4px;height:18.13px;overflow:hidden;"><svg style="position:absolute;left:0;top:0" width="18.4px" height="18.13px" viewBox="0 0 18 18"><rect x=".6" y=".6" width="16.8" height="16.8" rx="1.8" fill="#fff" stroke="#808080" stroke-width="1.2"/><rect x="2.6" y="5.7" width="12" height="10.4" fill="#3a7ed0"/><path d="M2.6 8.3H14.6M2.6 10.9H14.6M2.6 13.5H14.6M5.6 5.7V16.1M8.6 5.7V16.1M11.6 5.7V16.1" stroke="#a4c8f0" stroke-width=".9"/><rect x="7" y="8.2" width="3" height="2.6" fill="#fff"/><path d="M8.4 9.2L14.2 3L15.8 4.4L10 10.6L8 11Z" fill="#e8742a"/></svg></div><div style="left:935.47px;top:260.93px;width:73.6px;height:19.73px;font-size:13.2px;line-height:19.73px;color:#333;white-space:nowrap;overflow:hidden;">墙&ensp;&thinsp;布置</div><div style="left:884.53px;top:282.77px;width:43.2px;height:26.91px;background:#aab1bb;border-top:1px solid rgba(255,255,255,.3);border-bottom:1px solid rgba(0,0,0,.1);"></div><div style="left:927.73px;top:282.77px;width:81.33px;height:26.91px;background:#ebebeb;border-top:1px solid rgba(255,255,255,.6);border-bottom:1px solid rgba(0,0,0,.06);"></div><div style="left:903.6px;top:287.44px;width:18.4px;height:18.13px;overflow:hidden;"><svg style="position:absolute;left:0;top:0" width="18.4px" height="18.13px" viewBox="0 0 18 18"><rect x=".6" y=".6" width="16.8" height="16.8" rx="1.8" fill="#fff" stroke="#808080" stroke-width="1.2"/><rect x="2.6" y="5.7" width="12" height="10.4" fill="#3a7ed0"/><path d="M2.6 8.3H14.6M2.6 13.5H14.6M5.6 5.7V16.1M11.6 5.7V16.1" stroke="#a4c8f0" stroke-width=".9"/><rect x="6.2" y="8.6" width="4.4" height="4" fill="#fff"/><path d="M8.4 9.2L14.2 3L15.8 4.4L10 10.6L8 11Z" fill="#e8742a"/></svg></div><div style="left:935.47px;top:287.84px;width:73.6px;height:19.73px;font-size:13.2px;line-height:19.73px;color:#333;white-space:nowrap;overflow:hidden;">洞口布置</div><div style="left:884.53px;top:309.68px;width:43.2px;height:26.91px;background:#aab1bb;border-top:1px solid rgba(255,255,255,.3);border-bottom:1px solid rgba(0,0,0,.1);"></div><div style="left:927.73px;top:309.68px;width:81.33px;height:26.91px;background:#ebebeb;border-top:1px solid rgba(255,255,255,.6);border-bottom:1px solid rgba(0,0,0,.06);"></div><div style="left:903.6px;top:314.35px;width:18.4px;height:18.13px;overflow:hidden;"><svg style="position:absolute;left:0;top:0" width="18.4px" height="18.13px" viewBox="0 0 18 18"><rect x=".6" y=".6" width="16.8" height="16.8" rx="1.8" fill="#fff" stroke="#808080" stroke-width="1.2"/><path d="M2 6.8H16M2 12.8H16" stroke="#4a9ad8" stroke-width="1.1"/><path d="M3 12L5.8 7.8L8.6 12L11.4 7.8L14.2 12L15.4 10" fill="none" stroke="#d8404a" stroke-width="1"/><path d="M3 7.8L5.8 12L8.6 7.8L11.4 12L14.2 7.8" fill="none" stroke="#e88a8a" stroke-width=".6"/></svg></div><div style="left:987.73px;top:309.68px;width:21.33px;height:26.91px;background:#a4acb7;"></div><div style="left:935.47px;top:314.75px;width:52.27px;height:19.73px;font-size:13.2px;line-height:19.73px;color:#333;white-space:nowrap;overflow:hidden;">楼板生成</div><svg style="position:absolute;left:995.2px;top:317.55px" width="6.67px" height="11.2px" viewBox="0 0 5 8"><path d="M0 0L5 4L0 8Z" fill="#5e5e5e"/></svg><div style="left:884.53px;top:336.59px;width:43.2px;height:26.91px;background:#aab1bb;border-top:1px solid rgba(255,255,255,.3);border-bottom:1px solid rgba(0,0,0,.1);"></div><div style="left:927.73px;top:336.59px;width:81.33px;height:26.91px;background:#ebebeb;border-top:1px solid rgba(255,255,255,.6);border-bottom:1px solid rgba(0,0,0,.06);"></div><div style="left:903.6px;top:341.25px;width:18.4px;height:18.13px;overflow:hidden;"><svg style="position:absolute;left:0;top:0" width="18.4px" height="18.13px" viewBox="0 0 18 18"><rect x=".6" y=".6" width="16.8" height="16.8" rx="1.8" fill="#fff" stroke="#808080" stroke-width="1.2"/><rect x="1.8" y="1.8" width="9.6" height="8" rx=".8" fill="#a8c4e4" stroke="#1f4f90" stroke-width="1.4"/><rect x="4" y="3.8" width="5" height="4" fill="#e8f0fa" stroke="#3a6aa8" stroke-width=".8"/><rect x="7.4" y="9" width="9.2" height="8.6" rx=".8" fill="#7fa6d4" stroke="#1f4f90" stroke-width="1.4"/><rect x="9.6" y="11" width="4.8" height="4.6" fill="#e8f0fa" stroke="#3a6aa8" stroke-width=".8"/><path d="M11.6 3.4C14.4 3.4 15.8 5.2 15.6 7.6" fill="none" stroke="#1f3f78" stroke-width="1.5"/></svg></div><div style="left:987.73px;top:336.59px;width:21.33px;height:26.91px;background:#a4acb7;"></div><div style="left:935.47px;top:341.65px;width:52.27px;height:19.73px;font-size:13.2px;line-height:19.73px;color:#333;white-space:nowrap;overflow:hidden;letter-spacing:4.27px;">装配式</div><svg style="position:absolute;left:995.2px;top:344.45px" width="6.67px" height="11.2px" viewBox="0 0 5 8"><path d="M0 0L5 4L0 8Z" fill="#5e5e5e"/></svg><div style="left:884.53px;top:363.49px;width:124.53px;height:4.13px;background:#cfcfcf;"></div><div style="left:884.53px;top:367.63px;width:43.2px;height:26.91px;background:#aab1bb;border-top:1px solid rgba(255,255,255,.3);border-bottom:1px solid rgba(0,0,0,.1);"></div><div style="left:927.73px;top:367.63px;width:81.33px;height:26.91px;background:#ebebeb;border-top:1px solid rgba(255,255,255,.6);border-bottom:1px solid rgba(0,0,0,.06);"></div><div style="left:903.6px;top:372.29px;width:18.4px;height:18.13px;overflow:hidden;"><svg style="position:absolute;left:0;top:0" width="18.4px" height="18.13px" viewBox="0 0 18 18"><rect x=".6" y=".6" width="16.8" height="16.8" rx="1.8" fill="#fff" stroke="#808080" stroke-width="1.2"/><rect x="3.6" y="4" width="12" height="10.4" fill="#f4f9ff" stroke="#8fc0ee" stroke-width=".9"/><path d="M4 4.2L15.4 14.2" stroke="#2d6cc0" stroke-width="1.5"/><path d="M2.8 14.5H16.4" stroke="#2d6cc0" stroke-width="1.7"/><circle cx="4" cy="4.2" r=".9" fill="#4a8ad8"/><circle cx="15.6" cy="4.2" r=".9" fill="#4a8ad8"/></svg></div><div style="left:935.47px;top:372.69px;width:73.6px;height:19.73px;font-size:13.2px;line-height:19.73px;color:#333;white-space:nowrap;overflow:hidden;">斜杆布置</div><div style="left:884.53px;top:394.53px;width:43.2px;height:26.91px;background:#aab1bb;border-top:1px solid rgba(255,255,255,.3);border-bottom:1px solid rgba(0,0,0,.1);"></div><div style="left:927.73px;top:394.53px;width:81.33px;height:26.91px;background:#ebebeb;border-top:1px solid rgba(255,255,255,.6);border-bottom:1px solid rgba(0,0,0,.06);"></div><div style="left:935.47px;top:399.6px;width:73.6px;height:19.73px;font-size:13.2px;line-height:19.73px;color:#333;white-space:nowrap;overflow:hidden;">空间斜杆</div><div style="left:884.53px;top:421.44px;width:43.2px;height:26.91px;background:#aab1bb;border-top:1px solid rgba(255,255,255,.3);border-bottom:1px solid rgba(0,0,0,.1);"></div><div style="left:927.73px;top:421.44px;width:81.33px;height:26.91px;background:#ebebeb;border-top:1px solid rgba(255,255,255,.6);border-bottom:1px solid rgba(0,0,0,.06);"></div><div style="left:903.6px;top:426.11px;width:18.4px;height:18.13px;overflow:hidden;"><svg style="position:absolute;left:0;top:0" width="18.4px" height="18.13px" viewBox="0 0 18 18"><rect x=".6" y=".6" width="16.8" height="16.8" rx="1.8" fill="#fff" stroke="#808080" stroke-width="1.2"/><rect x="4.2" y="3.1" width="3.1" height="12.5" rx="1.4" fill="#cfe4fa" stroke="#58a0e8" stroke-width="1"/><rect x="11.2" y="3.1" width="3.1" height="12.5" rx="1.4" fill="#cfe4fa" stroke="#58a0e8" stroke-width="1"/><path d="M2.6 4.8H16M2.6 13.3H16" stroke="#2a7ae0" stroke-width="1.2"/></svg></div><div style="left:935.47px;top:426.51px;width:73.6px;height:19.73px;font-size:13.2px;line-height:19.73px;color:#333;white-space:nowrap;overflow:hidden;">次梁布置</div><div style="left:884.53px;top:448.35px;width:124.53px;height:4.13px;background:#cfcfcf;"></div><div style="left:884.53px;top:452.48px;width:43.2px;height:26.91px;background:#aab1bb;border-top:1px solid rgba(255,255,255,.3);border-bottom:1px solid rgba(0,0,0,.1);"></div><div style="left:927.73px;top:452.48px;width:81.33px;height:26.91px;background:#ebebeb;border-top:1px solid rgba(255,255,255,.6);border-bottom:1px solid rgba(0,0,0,.06);"></div><div style="left:903.6px;top:457.15px;width:18.4px;height:18.13px;overflow:hidden;"><svg style="position:absolute;left:0;top:0" width="18.4px" height="18.13px" viewBox="0 0 18 18"><rect x=".6" y=".6" width="16.8" height="16.8" rx="1.8" fill="#fff" stroke="#808080" stroke-width="1.2"/><path d="M2.6 7.5H10.5" stroke="#4a8ad8" stroke-width="1.2"/><path d="M3.6 7.8L6.6 10.8L9.6 7.8" fill="none" stroke="#4a8ad8" stroke-width="1"/><path d="M2.3 13.6H16" stroke="#1a7ae8" stroke-width="2.6"/><path d="M14.2 3.4V5.2M14.2 6.4V10.8M12.6 10.8H15.8M12.8 6.6H14.2" stroke="#e0161c" stroke-width="1.6" fill="none"/></svg></div><div style="left:935.47px;top:457.55px;width:73.6px;height:19.73px;font-size:13.2px;line-height:19.73px;color:#333;white-space:nowrap;overflow:hidden;">本层信息</div><div style="left:884.53px;top:479.39px;width:43.2px;height:26.91px;background:#aab1bb;border-top:1px solid rgba(255,255,255,.3);border-bottom:1px solid rgba(0,0,0,.1);"></div><div style="left:927.73px;top:479.39px;width:81.33px;height:26.91px;background:#ebebeb;border-top:1px solid rgba(255,255,255,.6);border-bottom:1px solid rgba(0,0,0,.06);"></div><div style="left:903.6px;top:484.05px;width:18.4px;height:18.13px;overflow:hidden;"><svg style="position:absolute;left:0;top:0" width="18.4px" height="18.13px" viewBox="0 0 18 18"><rect x=".6" y=".6" width="16.8" height="16.8" rx="1.8" fill="#fff" stroke="#808080" stroke-width="1.2"/><circle cx="5.8" cy="9.4" r="2.5" fill="#dcebfa" stroke="#2d6cc0" stroke-width="1.4"/><path d="M5.8 3V6.4M4.2 4.8L5.8 2.8L7.4 4.8M5.8 12.4V15.8M4.2 14L5.8 16L7.4 14" fill="none" stroke="#2d6cc0" stroke-width="1.3"/><path d="M15.4 5.4C13.2 5 13.2 6.6 12.8 9.4C12.5 12 12.2 13.4 10.6 13.2M11 9.4H15" fill="none" stroke="#e0161c" stroke-width="1.3"/></svg></div><div style="left:935.47px;top:484.45px;width:73.6px;height:19.73px;font-size:13.2px;line-height:19.73px;color:#333;white-space:nowrap;overflow:hidden;">材料强度</div><div style="left:884.53px;top:506.29px;width:124.53px;height:4.13px;background:#cfcfcf;"></div><div style="left:884.53px;top:510.43px;width:43.2px;height:26.91px;background:#aab1bb;border-top:1px solid rgba(255,255,255,.3);border-bottom:1px solid rgba(0,0,0,.1);"></div><div style="left:927.73px;top:510.43px;width:81.33px;height:26.91px;background:#ebebeb;border-top:1px solid rgba(255,255,255,.6);border-bottom:1px solid rgba(0,0,0,.06);"></div><div style="left:903.6px;top:515.09px;width:18.4px;height:18.13px;overflow:hidden;"><svg style="position:absolute;left:0;top:0" width="18.4px" height="18.13px" viewBox="0 0 18 18"><rect x=".6" y=".6" width="16.8" height="16.8" rx="1.8" fill="#fff" stroke="#808080" stroke-width="1.2"/><path d="M3 4.8H5V12.6H15.2V14.8H3Z" fill="#cfe0f5" stroke="#4a8ad8" stroke-width="1.1"/><path d="M9.4 2.8L16.2 9.8M16.2 2.8L9.4 9.8" stroke="#ec7c80" stroke-width="2"/></svg></div><div style="left:935.47px;top:515.49px;width:73.6px;height:19.73px;font-size:13.2px;line-height:19.73px;color:#333;white-space:nowrap;overflow:hidden;">构件删除</div><div style="left:884.53px;top:537.33px;width:43.2px;height:26.91px;background:#aab1bb;border-top:1px solid rgba(255,255,255,.3);border-bottom:1px solid rgba(0,0,0,.1);"></div><div style="left:927.73px;top:537.33px;width:81.33px;height:26.91px;background:#ebebeb;border-top:1px solid rgba(255,255,255,.6);border-bottom:1px solid rgba(0,0,0,.06);"></div><div style="left:903.6px;top:542px;width:18.4px;height:18.13px;overflow:hidden;"><svg style="position:absolute;left:0;top:0" width="18.4px" height="18.13px" viewBox="0 0 18 18"><rect x=".6" y=".6" width="16.8" height="16.8" rx="1.8" fill="#fff" stroke="#808080" stroke-width="1.2"/><path d="M2.5 6.3H11" stroke="#4a8ad8" stroke-width="1.2"/><path d="M3.4 6.6L6.6 10L9.8 6.6" fill="none" stroke="#4a8ad8" stroke-width="1"/><path d="M2.5 13.1H16" stroke="#1a7ae8" stroke-width="2.6"/><path d="M10.2 9L14.6 4.8L16.2 6.4L11.8 10.6L9.8 11Z" fill="#e8742a"/></svg></div><div style="left:987.73px;top:537.33px;width:21.33px;height:26.91px;background:#a4acb7;"></div><div style="left:935.47px;top:542.4px;width:52.27px;height:19.73px;font-size:13.2px;line-height:19.73px;color:#333;white-space:nowrap;overflow:hidden;">本层修改</div><svg style="position:absolute;left:995.2px;top:545.2px" width="6.67px" height="11.2px" viewBox="0 0 5 8"><path d="M0 0L5 4L0 8Z" fill="#5e5e5e"/></svg><div style="left:884.53px;top:564.24px;width:43.2px;height:26.91px;background:#aab1bb;border-top:1px solid rgba(255,255,255,.3);border-bottom:1px solid rgba(0,0,0,.1);"></div><div style="left:927.73px;top:564.24px;width:81.33px;height:26.91px;background:#ebebeb;border-top:1px solid rgba(255,255,255,.6);border-bottom:1px solid rgba(0,0,0,.06);"></div><div style="left:903.6px;top:568.91px;width:18.4px;height:18.13px;overflow:hidden;"><svg style="position:absolute;left:0;top:0" width="18.4px" height="18.13px" viewBox="0 0 18 18"><rect x=".6" y=".6" width="16.8" height="16.8" rx="1.8" fill="#fff" stroke="#808080" stroke-width="1.2"/><rect x="2.3" y="4.8" width="14.3" height="2.4" fill="#5cb85c"/><path d="M2.3 9.4H16.6M2.3 11.3H16.6M2.3 13.2H16.6M2.3 14.8H16.6" stroke="#2d6cc0" stroke-width="1.2"/><path d="M6.6 2.5V15.8" stroke="#3a7ab8" stroke-width="2.2"/></svg></div><div style="left:987.73px;top:564.24px;width:21.33px;height:26.91px;background:#a4acb7;"></div><div style="left:935.47px;top:569.31px;width:52.27px;height:19.73px;font-size:13.2px;line-height:19.73px;color:#333;white-space:nowrap;overflow:hidden;letter-spacing:4.27px;">层编辑</div><svg style="position:absolute;left:995.2px;top:572.11px" width="6.67px" height="11.2px" viewBox="0 0 5 8"><path d="M0 0L5 4L0 8Z" fill="#5e5e5e"/></svg></div>
<div style="left:1010.13px;top:117.07px;width:16.53px;height:474.4px;background:#f0f0f0;"></div>
<div style="left:1012.8px;top:133.87px;width:11.73px;height:318.13px;background:linear-gradient(to right,#c6c6c6,#dcdcdc 40%,#f2f2f2);border:1px solid #c8c8c8;border-radius:2px;"></div>
<svg style="position:absolute;left:1015.47px;top:123.73px" width="6.67px" height="3.47px" viewBox="0 0 8 4"><path d="M0 4H8L4 0Z" fill="#444"/></svg>
<svg style="position:absolute;left:1015.47px;top:582.13px" width="6.67px" height="3.47px" viewBox="0 0 8 4"><path d="M0 0H8L4 4Z" fill="#444"/></svg>
<div style="left:1015.47px;top:289.87px;width:6.4px;height:0.93px;background:#888;"></div>
<div style="left:1015.47px;top:292.27px;width:6.4px;height:0.93px;background:#888;"></div>
<div style="left:1015.47px;top:294.67px;width:6.4px;height:0.93px;background:#888;"></div>
<div style="left:881.33px;top:333.07px;width:130.93px;height:36.53px;border:2.67px solid #e8141c;border-radius:7.33px;"></div>
<div style="left:9.07px;top:600.27px;width:2px;height:47.2px;background:repeating-linear-gradient(to bottom,#777 0,#777 1.5px,#ececec 1.5px,#ececec 3.1px);"></div><div style="left:12.13px;top:600.27px;width:2px;height:47.2px;background:repeating-linear-gradient(to bottom,#777 0,#777 1.5px,#ececec 1.5px,#ececec 3.1px);"></div>
<div style="left:19.2px;top:595.73px;width:1013.33px;height:37.07px;background:#fff;border:1px solid #9c9c9c;"></div>
<div style="left:19.2px;top:632px;width:1013.33px;height:19.47px;background:#fff;border:1px solid #9c9c9c;"></div>
<div style="left:1016px;top:596.8px;width:15.73px;height:35.2px;background:#f0f0f0;"></div>
<svg style="position:absolute;left:1020.53px;top:603.47px" width="6.13px" height="3.47px" viewBox="0 0 8 4"><path d="M0 4H8L4 0Z" fill="#444"/></svg>
<svg style="position:absolute;left:1020.53px;top:620.8px" width="6.13px" height="3.47px" viewBox="0 0 8 4"><path d="M0 0H8L4 4Z" fill="#444"/></svg>
<div style="left:21.07px;top:596.27px;width:992.27px;height:29.6px;font-size:14.27px;line-height:14.4px;color:#2a2a2a;white-space:nowrap;overflow:hidden;">装载菜单定义文件<span class="mono">&nbsp;&lt;F:\PKPM\PKPM</span>装配式<span class="mono">\PKPM</span>装配式_独立运行<span class="mono">\PKPM-PC\menu\pmsrwcN.MNU&gt;</span><br>请选择菜单<span class="mono">/</span>输入命令</div>
<div style="left:21.07px;top:633.6px;width:992.27px;height:14.93px;font-size:14.27px;line-height:14.4px;color:#2a2a2a;white-space:nowrap;overflow:hidden;">命令<span class="mono">:</span></div>
<div style="left:3.73px;top:657.73px;width:218.4px;height:15.87px;background:#757980;color:#e8e8e8;font-size:11.87px;line-height:16.27px;text-align:center;white-space:nowrap;overflow:hidden;">18882.02,12732.16,0.00</div>
<div style="left:224.53px;top:657.73px;width:216.53px;height:15.87px;background:#757980;color:#e8e8e8;font-size:11.87px;line-height:16.27px;text-align:center;white-space:nowrap;overflow:hidden;">重生成完毕</div>
<div style="left:443.73px;top:657.73px;width:216.27px;height:15.87px;background:#757980;color:#e8e8e8;font-size:11.87px;line-height:16.27px;text-align:center;white-space:nowrap;overflow:hidden;">层间编辑层数: 0</div>
<div style="left:663.2px;top:657.73px;width:53.87px;height:15.87px;background:#757980;color:#e8e8e8;font-size:11.87px;line-height:16.27px;text-align:center;white-space:nowrap;overflow:hidden;">显示网格</div>
<div style="left:720px;top:657.73px;width:55.2px;height:15.87px;background:#757980;color:#e8e8e8;font-size:11.87px;line-height:16.27px;text-align:center;white-space:nowrap;overflow:hidden;">角度捕捉</div>
<div style="left:777.87px;top:657.73px;width:53.6px;height:15.87px;background:#757980;color:#e8e8e8;font-size:11.87px;line-height:16.27px;text-align:center;white-space:nowrap;overflow:hidden;">网格捕捉</div>
<div style="left:835.47px;top:657.73px;width:54.93px;height:15.87px;background:#0c63d6;color:#fff;font-size:11.87px;line-height:16.27px;text-align:center;white-space:nowrap;overflow:hidden;">节点捕捉</div>
<div style="left:893.33px;top:657.73px;width:54.67px;height:15.87px;background:#757980;color:#e8e8e8;font-size:11.87px;line-height:16.27px;text-align:center;white-space:nowrap;overflow:hidden;">显示叉丝</div>
<div style="left:950.93px;top:657.73px;width:55.47px;height:15.87px;background:#0c63d6;color:#fff;font-size:11.87px;line-height:16.27px;text-align:center;white-space:nowrap;overflow:hidden;">显示坐标</div>
<svg style="position:absolute;left:1019.73px;top:659.2px" width="12.27px" height="12.27px" viewBox="0 0 8 8" fill="#9a9a9a"><rect x="6" y="0" width="1.4" height="1.4"/><rect x="4" y="2" width="1.4" height="1.4"/><rect x="6" y="2" width="1.4" height="1.4"/><rect x="2" y="4" width="1.4" height="1.4"/><rect x="4" y="4" width="1.4" height="1.4"/><rect x="6" y="4" width="1.4" height="1.4"/><rect x="0" y="6" width="1.4" height="1.4"/><rect x="2" y="6" width="1.4" height="1.4"/><rect x="4" y="6" width="1.4" height="1.4"/><rect x="6" y="6" width="1.4" height="1.4"/></svg>
</div></body></html>
